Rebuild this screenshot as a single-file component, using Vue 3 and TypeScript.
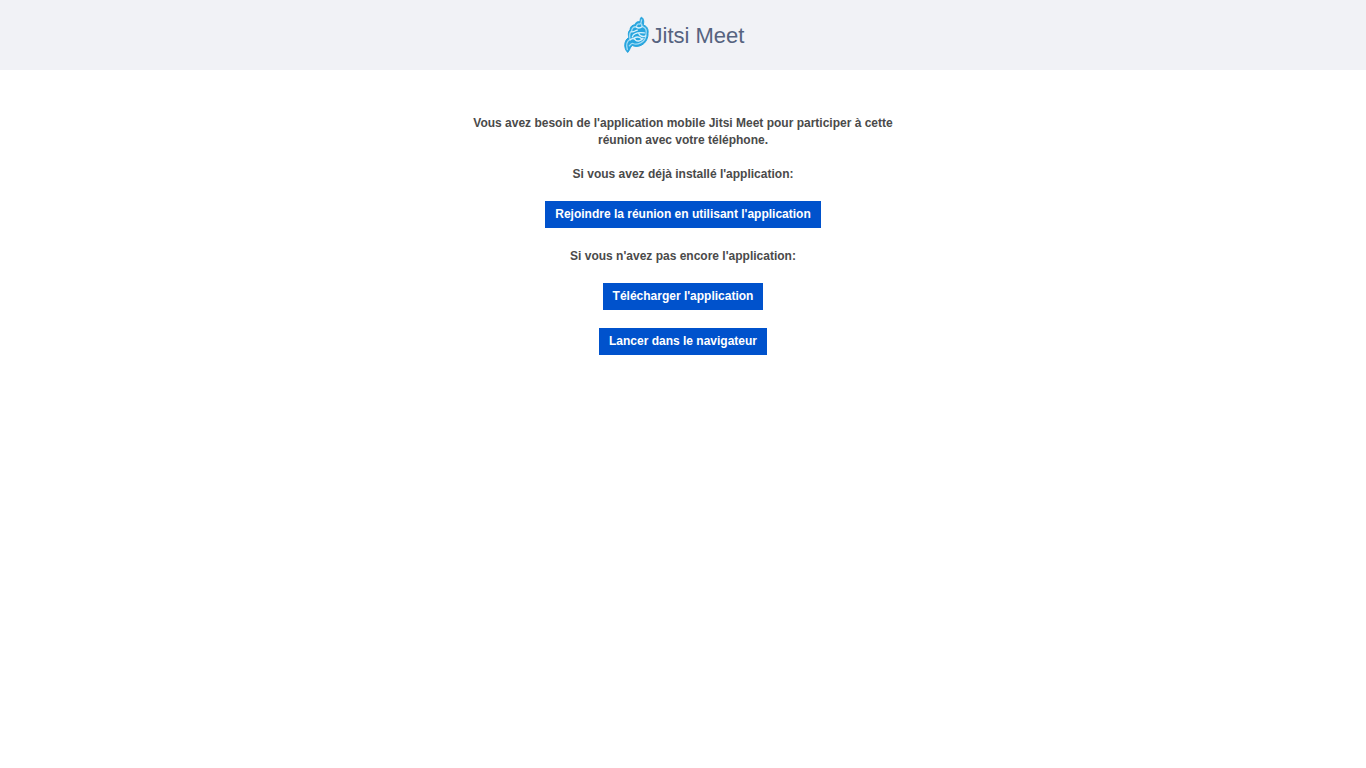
<script setup lang="ts">
interface Step {
  message?: string
  action: string
  href: string
}

const steps: Step[] = [
  {
    message: "Si vous avez déjà installé l'application:",
    action: "Rejoindre la réunion en utilisant l'application",
    href: '#rejoindre',
  },
  {
    message: "Si vous n'avez pas encore l'application:",
    action: "Télécharger l'application",
    href: '#telecharger',
  },
  { action: 'Lancer dans le navigateur', href: '#navigateur' },
]
</script>

<template>
  <div class="page">
    <header class="header">
      <svg class="mark" viewBox="18 18 75 111" aria-hidden="true">
        <path
          class="body"
          d="M29 126 C21 118 18 105 22 94 C24 87 29 83 33 81 C29 72 31 62 36 58 C36 49 43 43 51 43 C52 36 58 32 64 34 C68 31 65 23 70 20 C76 22 78 30 77 37 C76 40 76 43 77 44 C88 47 92 58 90 68 C91 83 83 97 72 103 C63 109 51 109 43 105 C36 109 37 118 29 126 Z"
        />
        <path
          class="edge"
          d="M28 117 C24 104 26 93 36 87 C34 76 34 66 41 62 C41 53 47 48 55 49 C56 42 61 38 66 41 C71 38 69 32 71 28 M71 41 C70 46 71 48 76 50 C84 53 86 61 84 70 C84 82 77 93 68 97 C60 101 51 102 45 99 C40 97 38 102 34 106"
        />
        <path
          class="fold"
          d="M41 64 C48 65 52 60 58 59 M55 50 C61 54 67 53 72 49 M43 79 C47 66 60 65 79 67 M62 69 C67 78 75 80 83 76 M37 88 C43 82 49 83 53 89 C59 94 69 91 75 84 M48 83 C56 78 64 79 70 84"
        />
      </svg>
      <span class="wordmark">Jitsi Meet</span>
    </header>
    <main class="content">
      <p class="text">
        Vous avez besoin de l'application mobile Jitsi Meet pour participer à cette réunion avec
        votre téléphone.
      </p>
      <template v-for="step in steps" :key="step.href">
        <p v-if="step.message" class="text">{{ step.message }}</p>
        <a class="button" :href="step.href">{{ step.action }}</a>
      </template>
    </main>
  </div>
</template>

<style>
body {
  margin: 0;
  background: #fff;
}
</style>

<style scoped>
.page {
  font-family: 'Liberation Sans', Arial, sans-serif;
  font-size: 12px;
  font-weight: 700;
  line-height: 17px;
  color: #4a4a4a;
}

.header {
  display: flex;
  align-items: center;
  justify-content: center;
  gap: 3px;
  box-sizing: border-box;
  height: 70px;
  padding-left: 2px;
  background: #f1f2f6;
}

.mark {
  width: 25px;
  height: 38px;
}

.body {
  fill: #27a5de;
  stroke: #27a5de;
  stroke-width: 3;
  stroke-linejoin: round;
}

.edge {
  fill: none;
  stroke: #a3dbf4;
  stroke-width: 4;
  stroke-linecap: round;
  stroke-linejoin: round;
}

.fold {
  fill: none;
  stroke: #d8f0fb;
  stroke-width: 4;
  stroke-linecap: round;
  stroke-linejoin: round;
}

.wordmark {
  padding-top: 2px;
  font-size: 22px;
  font-weight: 400;
  line-height: 28px;
  color: #56637f;
}

.content {
  display: flex;
  flex-direction: column;
  align-items: center;
  gap: 17px;
  max-width: 440px;
  margin: 0 auto;
  padding: 45px 20px;
  text-align: center;
}

.text {
  margin: 0;
}

.button {
  margin-top: 1px;
  padding: 5px 10px;
  background: #0052cc;
  color: #fff;
  text-decoration: none;
}

.button + .text {
  margin-top: 3px;
}
</style>
